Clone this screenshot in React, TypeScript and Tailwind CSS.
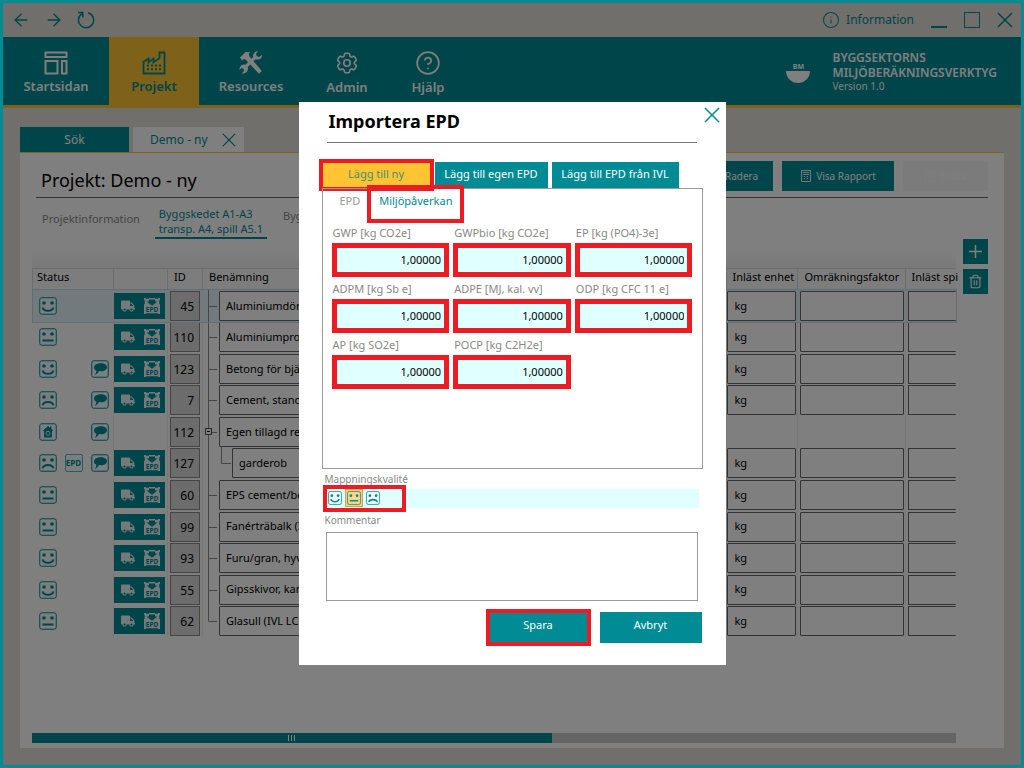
import type { ReactNode } from 'react';
import { ArrowLeft, ArrowRight, CircleHelp, Info, Trash2 } from 'lucide-react';
import { FaTruck } from 'react-icons/fa';
import { HiOutlineCog6Tooth } from 'react-icons/hi2';

type Mood = 'happy' | 'neutral' | 'sad' | 'house';

interface Row {
  id: number;
  mood: Mood;
  name: string;
  epd?: boolean;
  comment?: boolean;
  parent?: boolean;
  child?: boolean;
}

const rows: Row[] = [
  { id: 45, mood: 'happy', name: 'Aluminiumdörr' },
  { id: 110, mood: 'neutral', name: 'Aluminiumprofil' },
  { id: 123, mood: 'happy', name: 'Betong för bjälklag', comment: true },
  { id: 7, mood: 'sad', name: 'Cement, standard', comment: true },
  { id: 112, mood: 'house', name: 'Egen tillagd resurs', comment: true, parent: true },
  { id: 127, mood: 'sad', name: 'garderob', comment: true, epd: true, child: true },
  { id: 60, mood: 'neutral', name: 'EPS cement/betong' },
  { id: 99, mood: 'neutral', name: 'Fanérträbalk (IVL)' },
  { id: 93, mood: 'happy', name: 'Furu/gran, hyvlad' },
  { id: 55, mood: 'happy', name: 'Gipsskivor, kartong' },
  { id: 62, mood: 'neutral', name: 'Glasull (IVL LCR)' },
];

const fields = [
  'GWP [kg CO2e]',
  'GWPbio [kg CO2e]',
  'EP [kg (PO4)-3e]',
  'ADPM [kg Sb e]',
  'ADPE [MJ, kal. vv]',
  'ODP [kg CFC 11 e]',
  'AP [kg SO2e]',
  'POCP [kg C2H2e]',
];

function Face({ mood, className }: { mood: Mood; className: string }) {
  return (
    <svg viewBox="0 0 18 18" className={className} fill="none" stroke="#008b95">
      <rect x="0.75" y="0.75" width="16.5" height="16.5" rx="2" strokeWidth="1" fill="#f4fcfc" />
      {mood === 'house' ? (
        <>
          <path d="M9 3 3.5 8H5v6.500h8V8h1.500L12.500 6V3.500H11V4.800Z" fill="#008b95" stroke="none" />
          <circle cx="9" cy="10.300" r="2" stroke="#f4fcfc" strokeWidth="0.900" />
        </>
      ) : (
        <>
          <circle cx="5" cy="6" r="1.800" fill="#008b95" stroke="none" />
          <circle cx="13" cy="6" r="1.800" fill="#008b95" stroke="none" />
          {mood === 'happy' && <path d="M3.600 10.500c1.200 4.400 9.600 4.400 10.800 0" strokeWidth="2" />}
          {mood === 'neutral' && <path d="M3.500 12.500h11" strokeWidth="2" />}
          {mood === 'sad' && <path d="M3.600 14.300c1.200-4.300 9.600-4.300 10.800 0" strokeWidth="2" />}
        </>
      )}
    </svg>
  );
}

function Bubble() {
  return (
    <svg viewBox="0 0 18 18" className="size-[18px]">
      <rect x="0.750" y="0.750" width="16.500" height="16.500" rx="2" fill="#f4fcfc" stroke="#008b95" />
      <path d="M9.800 3.300c3.500 0 6.200 1.600 6.200 3.900s-2.500 4-5.700 4l-2.500-.1c-.5 1.700-1.800 3.100-4.300 4 1.500-1.600 1.900-3.100 1.700-4.600C3.600 9.800 3 8.600 3 7.400c0-2.500 3.300-4.100 6.800-4.100Z" fill="#008b95" />
    </svg>
  );
}

function EpdBadge() {
  return (
    <span className="flex size-[18px] items-center justify-center rounded-[2px] border border-[#5ab4bb] bg-[#f4fcfc] text-[8px] leading-none font-bold text-[#008b95]">
      EPD
    </span>
  );
}

function EpdImport() {
  return (
    <svg viewBox="0 0 16 16" className="size-4">
      <path d="M0 0h16v16H0Z" fill="#e8f4f5" />
      <path d="M2 0h3v.7H2ZM11 0h3v.7h-3ZM0 2h.7v4H0ZM15.300 2h.7v4h-.7ZM2 15.300h12v.7H2Z" fill="#008b95" />
      <path d="M5 1.500h6v2h2.500L8 7.800 2.500 3.500H5Z" fill="#008b95" />
      <text x="8" y="14.300" textAnchor="middle" fontSize="6.500" fontWeight="700" fill="#008b95">
        EPD
      </text>
    </svg>
  );
}

function StartIcon() {
  return (
    <svg viewBox="0 0 24 24" className="size-6" fill="none" stroke="currentColor" strokeWidth="2">
      <rect x="1.500" y="1.500" width="21" height="4.500" />
      <rect x="1.500" y="10" width="12" height="12.500" />
      <rect x="18" y="10" width="4.500" height="12.500" />
    </svg>
  );
}

function FactoryIcon() {
  return (
    <svg viewBox="0 0 24 24" className="size-6" fill="none" stroke="currentColor" strokeWidth="1.800">
      <path d="M1.500 22.500V11l5-3.500v4l5-4v4l6-4.500V1.500h5v21Z" />
      <path d="M5 14.500h2m2 0h2m2 0h2m2 0h2m-14 3.800h2m2 0h2m2 0h2m2 0h2" strokeWidth="2" />
    </svg>
  );
}

function ToolsIcon() {
  return (
    <svg viewBox="0 0 24 24" className="size-6" fill="currentColor">
      <path d="M1 6.500 6.500 1l5 .3-1.800 1.500.8 2.700L22.800 20 20 22.800 6.800 8.800 4.800 8 3 9.500Z" />
      <path d="M16.500 8.200 8.800 16c.5 2.500-.2 4.300-1.800 5.500-1.200.9-2.700 1.200-4.200.8l2.400-2.500-.8-2-2-.7L0.500 19c-.2-3.500 2.500-6 6-5.300l7.700-7.700c-.6-3 1.300-5.800 5-6l-2.300 2.800.8 2.500 2.500.8 2.800-2.300c.2 3.500-2.500 5.500-6.500 4.400Z" />
    </svg>
  );
}

function ReloadIcon() {
  return (
    <svg viewBox="0 0 18 18" className="size-[18px]" fill="none" stroke="currentColor" strokeWidth="1.500">
      <path d="M5 2.600A7.600 7.600 0 1 0 11 1.700M1 1.600h4.800v4.800" />
    </svg>
  );
}

function Cross({ className }: { className: string }) {
  return (
    <svg viewBox="0 0 16 16" className={className} fill="none" stroke="currentColor" strokeWidth="1.500">
      <path d="M1 1 15 15M15 1 1 15" />
    </svg>
  );
}

function ReportIcon({ className }: { className: string }) {
  return (
    <svg viewBox="0 0 12 12" className={className} fill="none" stroke="currentColor">
      <path d="M1.500 0.500h9v11h-9ZM3 2.500h6M3 4.500h6M4 6.500h1m1.500 0h1.500M4 8.500h1m1.500 0h1.500" strokeWidth="0.900" />
    </svg>
  );
}

function NavItem({ label, width, active, children }: { label: string; width: string; active?: boolean; children: ReactNode }) {
  return (
    <button
      className={`${width} flex flex-col items-center justify-center gap-px pt-1 text-[13px] leading-5 font-semibold ${
        active ? 'bg-[#ffc433] text-[#008b95]' : 'text-white'
      }`}
    >
      {children}
      {label}
    </button>
  );
}

function Toolbar() {
  return (
    <div className="flex h-[34px] shrink-0 items-center justify-between px-2 text-[#008b95]">
      <div className="flex items-center gap-[13px]">
        <button aria-label="Bakåt"><ArrowLeft className="size-5" strokeWidth={1.6} /></button>
        <button aria-label="Framåt"><ArrowRight className="size-5" strokeWidth={1.6} /></button>
        <button aria-label="Uppdatera"><ReloadIcon /></button>
      </div>
      <div className="flex items-center gap-[17px]">
        <button className="flex items-center gap-1.5 text-[12px]">
          <Info className="size-[18px]" strokeWidth={1.4} />
          Information
        </button>
        <button aria-label="Minimera" className="h-4 w-4 border-b-2 border-[#008b95]" />
        <button aria-label="Maximera" className="size-4 border-[1.5px] border-[#008b95]" />
        <button aria-label="Stäng"><Cross className="size-4" /></button>
      </div>
    </div>
  );
}

function Header() {
  return (
    <header className="flex h-[71px] shrink-0 justify-between border-b-3 border-[#ffc433] bg-[#008b95]">
      <nav className="flex">
        <NavItem label="Startsidan" width="w-[106px]"><StartIcon /></NavItem>
        <NavItem label="Projekt" width="w-[90px]" active><FactoryIcon /></NavItem>
        <NavItem label="Resources" width="w-[104px]"><ToolsIcon /></NavItem>
        <NavItem label="Admin" width="w-[88px]"><HiOutlineCog6Tooth className="size-[26px]" /></NavItem>
        <NavItem label="Hjälp" width="w-[74px]"><CircleHelp className="size-[26px]" strokeWidth={1.6} /></NavItem>
      </nav>
      <div className="flex items-center gap-[22px] pr-6 text-white">
        <div className="flex flex-col items-center pt-1 text-[7px] leading-2 font-bold">
          BM
          <span className="h-3 w-6 rounded-b-full bg-white" />
        </div>
        <div className="text-[12px] leading-[15px] font-semibold">
          <div>BYGGSEKTORNS</div>
          <div>MILJÖBERÄKNINGSVERKTYG</div>
          <div className="text-[10px] leading-[13px] font-normal">Version 1.0</div>
        </div>
      </div>
    </header>
  );
}

function TreeLines({ row, last }: { row: Row; last: boolean }) {
  return (
    <svg className={row.child ? 'h-8 w-[27px] shrink-0' : 'h-8 w-3.5 shrink-0'} fill="none" stroke="#8a8a8a">
      <path d={last ? 'M3.500 0V16' : 'M3.500 0V32'} />
      {row.child ? <path d="M16.500 0V16.500H26" /> : <path d="M3.500 16.500H12" />}
      {row.parent && (
        <>
          <rect x="0.500" y="12.500" width="6" height="6" fill="#ffffff" stroke="#555555" />
          <path d="M2 15.500H5" stroke="#000000" />
        </>
      )}
    </svg>
  );
}

const box = 'h-[30px] rounded-[1px] border border-[#666666] bg-white';

function ResourceTable() {
  return (
    <table className="h-[369px] w-full table-fixed border-collapse text-left text-[12px] text-black">
      <colgroup>
        <col className="w-[81px]" />
        <col className="w-[54px]" />
        <col className="w-[35px]" />
        <col />
        <col className="w-[71px]" />
        <col className="w-[108px]" />
        <col className="w-[51px]" />
      </colgroup>
      <thead>
        <tr className="h-[21px] border-y border-[#dddddd] bg-[#fafafa] text-[11px] leading-4 [&>th]:border-l [&>th]:border-[#dddddd] [&>th]:pt-0 [&>th]:pb-1 [&>th]:font-normal [&>th]:whitespace-nowrap">
          <th className="pl-1">Status</th>
          <th aria-label="Åtgärder" />
          <th className="pl-1.5">ID</th>
          <th className="pl-1.5">Benämning</th>
          <th className="pl-1.5">Inläst enhet</th>
          <th className="pl-[7px]">Omräkningsfaktor</th>
          <th className="pl-1.5">Inläst spi</th>
        </tr>
      </thead>
      <tbody>
        {rows.map((row, i) => (
          <tr key={row.id} className={i === 0 ? 'bg-[#e4f5fa] outline outline-[#c2dde8]' : ''}>
            <td className="p-0">
              <div className="flex gap-2 pl-1.5">
                <Face mood={row.mood} className="size-[18px]" />
                {row.epd ? <EpdBadge /> : <span className="size-[18px]" />}
                {row.comment && <Bubble />}
              </div>
            </td>
            <td className="border-l border-[#eeeeee] p-0">
              {!row.parent && (
                <div className="flex h-[26px] w-[51px] items-center justify-between bg-[#008b95] pr-[5px] pl-[7px] text-[#e8f4f5]">
                  <button aria-label="Transport"><FaTruck className="h-3 w-3.5" /></button>
                  <button aria-label="Importera EPD"><EpdImport /></button>
                </div>
              )}
            </td>
            <td className="border-l border-[#eeeeee] p-0 pl-0.5">
              <div className="flex h-[30px] w-[30px] items-center justify-end border border-[#888888] bg-[#d8d8d8] pr-[5px] pt-0.5">{row.id}</div>
            </td>
            <td className="border-l border-[#eeeeee] p-0">
              <div className="flex h-[30px] items-center pl-0.5 text-[11px]">
                <TreeLines row={row} last={i === rows.length - 1} />
                <div className={`${box} flex flex-1 items-center pl-1.5 whitespace-nowrap`}>{row.name}</div>
              </div>
            </td>
            <td className="border-l border-[#eeeeee] p-0">
              {!row.parent && <div className={`${box} flex w-[69px] items-center pl-[7px] text-[11px]`}>kg</div>}
            </td>
            <td className="border-l border-[#eeeeee] p-0 pl-0.5">
              {!row.parent && <div className={`${box} w-[104px]`} />}
            </td>
            <td className="border-l border-[#eeeeee] p-0 pl-0.5">
              {!row.parent && <div className={`${box} border-r-0`} />}
            </td>
          </tr>
        ))}
      </tbody>
    </table>
  );
}

function ProjectPage() {
  const action = 'flex h-[30px] items-center justify-center gap-1 text-[10px]';
  return (
    <main className="flex flex-1 flex-col px-[17px] pt-[19px] pb-[17px]">
      <div className="flex h-[26px] gap-1 border-b border-[#ffc433] text-[12px]">
        <button className="w-[109px] bg-[#008b95] text-white">Sök</button>
        <div className="flex w-[111px] items-center justify-between bg-white pr-2 pl-[17px] text-[#008b95]">
          Demo - ny
          <button aria-label="Stäng flik"><Cross className="size-3.5" /></button>
        </div>
      </div>
      <section className="flex flex-1 flex-col bg-white pt-2 pr-4 pb-[5px] pl-3">
        <div className="ml-1 flex h-[37px] items-start justify-between border-b border-[#666666] pl-[5px]">
          <h1 className="pt-1.5 text-[18px] leading-[26px] text-black">Projekt: Demo - ny</h1>
          <div className="flex gap-[9px]">
            <button className={`${action} w-[111px] bg-[#008b95] pl-12 text-white`}>Radera</button>
            <button className={`${action} w-[112px] bg-[#008b95] text-white`}>
              <ReportIcon className="size-3" />
              Visa Rapport
            </button>
            <button disabled className={`${action} w-[85px] bg-[#f6f6f6] text-[#ffffff]`}>
              <ReportIcon className="size-3" />
              Spara
            </button>
          </div>
        </div>
        <div className="flex h-[41px] items-end pl-2.5 text-[11px] leading-[15px] text-[#888888]">
          <button className="pb-[13px]">Projektinformation</button>
          <button className="mr-4 ml-[15px] border-b-2 border-[#008b95] px-1 pb-px text-left text-[#008b95]">
            Byggskedet A1-A3
            <br />
            transp. A4, spill A5.1
          </button>
          <button className="pb-4">Byggskedet</button>
        </div>
        <div className="flex flex-1 gap-[7px]">
          <div className="flex min-w-0 flex-1 flex-col">
            <div className="mt-3 h-[17px] bg-linear-to-b from-white to-[#f2f2f2]" />
            <div className="flex-1">
              <ResourceTable />
            </div>
            <div className="flex h-2.5 bg-[#cacaca]">
              <div className="flex w-9/16 items-center justify-center gap-0.5 bg-[#008b95]">
                <span className="h-1.5 w-px bg-white" />
                <span className="h-1.5 w-px bg-white" />
                <span className="h-1.5 w-px bg-white" />
              </div>
            </div>
          </div>
          <div className="flex flex-col gap-[5px] text-white">
            <button aria-label="Lägg till" className="flex size-[25px] items-center justify-center bg-[#008b95]">
              <svg viewBox="0 0 13 13" className="size-[13px]" stroke="currentColor" strokeWidth="1.500">
                <path d="M6.500 0v13M0 6.500h13" />
              </svg>
            </button>
            <button aria-label="Ta bort" className="flex size-[25px] items-center justify-center bg-[#008b95]">
              <Trash2 className="size-[15px]" strokeWidth={1.8} />
            </button>
          </div>
        </div>
      </section>
    </main>
  );
}

function ImportDialog() {
  return (
    <div role="dialog" aria-labelledby="dialog-title" className="flex w-[427px] flex-col bg-white px-[23px] pb-[22px]">
      <div className="-mr-[18px] flex h-10 items-start justify-between pr-px pl-[7px]">
        <h2 id="dialog-title" className="pt-1.5 text-[18px] leading-[26px] font-bold text-black">Importera EPD</h2>
        <button aria-label="Stäng" className="pt-[5px] text-[#008b95]"><Cross className="size-4" /></button>
      </div>
      <div className="mr-1.5 ml-[5px] h-px bg-[#777777]" />
      <div className="mt-[19px] flex h-[26px] gap-1 text-[11px]">
        <button className="w-[109px] bg-[#ffc433] text-[#3f8f73] outline-4 -outline-offset-1 outline-[#ed1c24]">Lägg till ny</button>
        <button className="w-[113px] bg-[#008b95] text-white">Lägg till egen EPD</button>
        <button className="w-[127px] bg-[#008b95] text-white">Lägg till EPD från IVL</button>
      </div>
      <div className="h-[281px] border border-[#999999] pl-[9px]">
        <div className="flex h-[34px] items-start pl-2 text-[11px]">
          <button className="pt-1 text-[#999999]">EPD</button>
          <button className="-mt-1 ml-[7px] h-[38px] w-[97px] border-4 border-[#ed1c24] text-[#008b95]">
            <span className="block pb-1">Miljöpåverkan</span>
          </button>
        </div>
        <div className="grid w-[361px] grid-cols-3 gap-x-1">
          {fields.map((label) => (
            <label key={label} className="flex h-14 flex-col gap-0.5 pt-0.5 text-[11px] leading-4 whitespace-nowrap text-[#888888]">
              <span className="pl-px">{label}</span>
              <input
                defaultValue="1,00000"
                className="h-[34px] w-full border-5 border-[#ed1c24] bg-[#e0ffff] pr-[3px] text-right text-[11px] text-black"
              />
            </label>
          ))}
        </div>
      </div>
      <div className="pt-0.5 pl-[3px] text-[10px] leading-4 text-[#888888]">Mappningskvalité</div>
      <div className="mt-0.5 mr-1 ml-1 flex h-[19px] items-center bg-[#e0ffff]">
        <div className="-ml-[3px] flex h-[27px] w-[83px] items-center gap-[3px] border-4 border-[#ed1c24] pl-px">
          <button aria-label="Bra"><Face mood="happy" className="block size-3.5" /></button>
          <button aria-label="Medel" className="border border-[#c9a45c] bg-[#ffcf70] p-px">
            <Face mood="neutral" className="block size-3.5 [&>rect]:fill-[#ffd98a]" />
          </button>
          <button aria-label="Dålig"><Face mood="sad" className="block size-3.5" /></button>
        </div>
      </div>
      <label htmlFor="comment" className="pt-1 pl-[3px] text-[10px] leading-4 text-[#888888]">Kommentar</label>
      <textarea id="comment" className="mt-1 mr-[5px] ml-1 h-[69px] resize-none border border-[#999999] bg-white p-1 text-[11px]" />
      <div className="mt-[11px] flex justify-end gap-3 pr-px text-[11px] text-white">
        <button className="h-[31px] w-[99px] bg-[#008b95] pb-1 outline-4 -outline-offset-1 outline-[#ed1c24]">Spara</button>
        <button className="h-[31px] w-[102px] bg-[#008b95] pb-1">Avbryt</button>
      </div>
    </div>
  );
}

export default function App() {
  return (
    <div className="relative flex min-h-screen flex-col border-3 border-[#008b95] bg-[#e2ded8] font-['Noto_Sans','Open_Sans',sans-serif]">
      <Toolbar />
      <Header />
      <ProjectPage />
      <div className="absolute inset-0 flex items-center justify-center bg-black/50 pb-0.5">
        <ImportDialog />
      </div>
    </div>
  );
}
